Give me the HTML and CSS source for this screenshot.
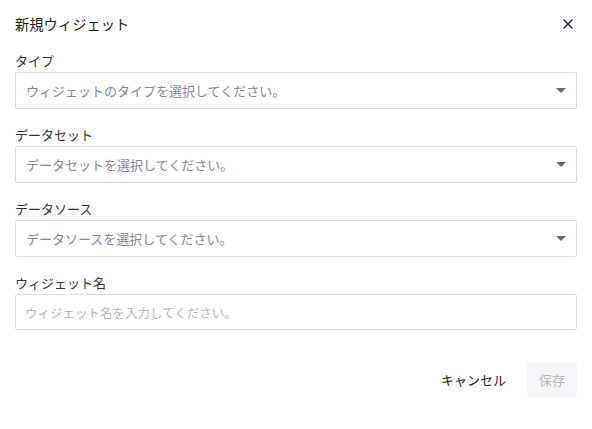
FILE: index.html
```html
<!DOCTYPE html>
<html lang="ja">
<head>
    <meta charset="UTF-8">
    <meta name="viewport" content="width=device-width, initial-scale=1.0">
    <title>新規ウィジェット</title>
    <link rel="stylesheet" href="styles.css">
</head>
<body>
    <div class="dialog">
        <div class="dialog-header">
            <h1 class="dialog-title">新規ウィジェット</h1>
            <span class="close-button">
                <svg width="10" height="10" viewBox="0 0 10 10"><path d="M0.5 0.5L9.5 9.5M9.5 0.5L0.5 9.5" stroke="#1e2638" stroke-width="1.4" fill="none"/></svg>
            </span>
        </div>

        <div class="field">
            <label class="field-label">タイプ</label>
            <div class="select-box">
                <span class="placeholder">ウィジェットのタイプを選択してください。</span>
                <span class="caret"></span>
            </div>
        </div>

        <div class="field">
            <label class="field-label">データセット</label>
            <div class="select-box">
                <span class="placeholder">データセットを選択してください。</span>
                <span class="caret"></span>
            </div>
        </div>

        <div class="field">
            <label class="field-label">データソース</label>
            <div class="select-box">
                <span class="placeholder">データソースを選択してください。</span>
                <span class="caret"></span>
            </div>
        </div>

        <div class="field">
            <label class="field-label">ウィジェット名</label>
            <input class="text-input" type="text" placeholder="ウィジェット名を入力してください。">
        </div>

        <div class="dialog-footer">
            <button class="cancel-button">キャンセル</button>
            <button class="save-button" disabled>保存</button>
        </div>
    </div>
</body>
</html>
```

FILE: styles.css
```css
body {
    margin: 0;
    background-color: #ffffff;
    font-family: "Noto Sans CJK JP", "Noto Sans", sans-serif;
    color: #222;
}

.dialog {
    width: 592px;
    box-sizing: border-box;
    padding: 14px 15px 0 15px;
}

.dialog-header {
    display: flex;
    align-items: center;
    justify-content: space-between;
    height: 20px;
    margin-bottom: 17px;
}

.dialog-title {
    margin: 0;
    font-size: 14.3px;
    font-weight: normal;
    line-height: 20px;
    color: #222;
}

.close-button {
    display: flex;
    margin-right: 4px;
    cursor: pointer;
}

.field {
    display: flex;
    flex-direction: column;
    margin-bottom: 16px;
}

.field-label {
    font-size: 13px;
    line-height: 20px;
    margin-bottom: 1px;
    color: #333;
}

.select-box {
    display: flex;
    align-items: center;
    justify-content: space-between;
    height: 37px;
    box-sizing: border-box;
    border: 1px solid #d9dde4;
    border-radius: 2px;
    padding: 0 10px;
}

.placeholder {
    font-size: 13px;
    color: #7d889c;
}

.caret {
    width: 0;
    height: 0;
    border-left: 5px solid transparent;
    border-right: 5px solid transparent;
    border-top: 5px solid #5c6880;
}

.text-input {
    height: 36px;
    box-sizing: border-box;
    border: 1px solid #d9dde4;
    border-radius: 2px;
    padding: 0 9px;
    font-family: inherit;
    font-size: 12.5px;
    outline: none;
}

.text-input::placeholder {
    color: #b1b7c1;
}

.dialog-footer {
    display: flex;
    justify-content: flex-end;
    align-items: center;
    gap: 11px;
    margin-top: 32px;
}

.cancel-button {
    background: none;
    border: none;
    font-family: inherit;
    font-size: 13px;
    color: #222;
    padding: 0 10px;
    height: 35px;
    cursor: pointer;
}

.save-button {
    width: 50px;
    height: 35px;
    border: none;
    border-radius: 4px;
    background-color: #f5f6f8;
    font-family: inherit;
    font-size: 13px;
    color: #b3b8c0;
    padding: 0;
}
```
